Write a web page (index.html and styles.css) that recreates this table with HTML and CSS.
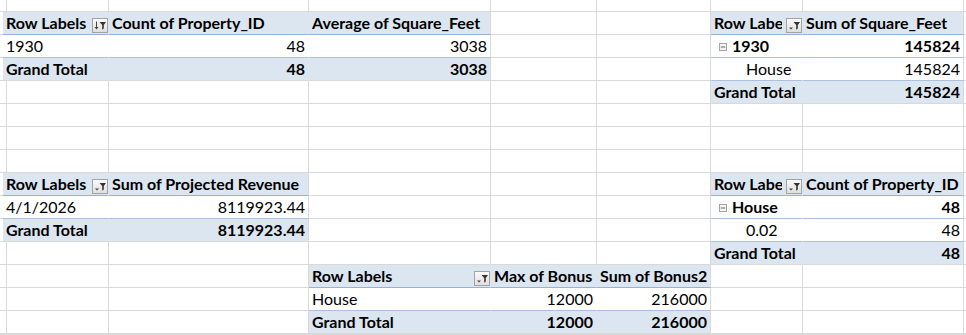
FILE: index.html
```html
<!DOCTYPE html>
<html>
<head>
<meta charset="utf-8">
<link rel="stylesheet" href="styles.css">
</head>
<body>
<div class="sheet">
<!-- row 0 -->
<div class="c"></div><div class="c"></div><div class="c"></div><div class="c"></div><div class="c"></div><div class="c"></div><div class="c"></div><div class="c"></div><div class="c"></div>
<!-- row 1 -->
<div class="c"></div>
<div class="c h in lbl"><span class="tx">Row Labels</span><svg class="fb" viewBox="0 0 16 15"><defs><linearGradient id="g1" x1="0" y1="0" x2="0" y2="1"><stop offset="0" stop-color="#fbfbfb"/><stop offset="1" stop-color="#dedede"/></linearGradient></defs><rect x="0.5" y="0.5" width="15" height="14" fill="url(#g1)" stroke="#a3a3a3"/><line x1="4.5" y1="3.5" x2="4.5" y2="10" stroke="#444"/><polygon points="2.5,9 6.5,9 4.5,11.5" fill="#444"/><polygon points="7.5,4 14,4 11.8,7 11.8,10.5 10.2,11.8 10.2,7" fill="#333"/></svg></div>
<div class="c h in"><span class="tx">Count of Property_ID</span></div>
<div class="c h"><span class="tx">Average of Square_Feet</span></div>
<div class="c"></div><div class="c"></div>
<div class="c h in lbl cl"><span class="tx">Row Labels</span><svg class="fb" viewBox="0 0 16 15"><rect x="0.5" y="0.5" width="15" height="14" fill="url(#g1)" stroke="#a3a3a3"/><polygon points="3,9.5 7,9.5 5,11.5" fill="#444"/><polygon points="7.5,4 14,4 11.8,7 11.8,10.5 10.2,11.8 10.2,7" fill="#333"/></svg></div>
<div class="c h"><span class="tx">Sum of Square_Feet</span></div>
<div class="c"></div>
<!-- row 2 -->
<div class="c"></div>
<div class="c d in"><span class="tx">1930</span></div>
<div class="c d in r"><span class="tx">48</span></div>
<div class="c d r"><span class="tx">3038</span></div>
<div class="c"></div><div class="c"></div>
<div class="c d in b grp"><svg class="cb" viewBox="0 0 9 9"><rect x="0.5" y="0.5" width="8" height="8" fill="#f4f4f4" stroke="#9c9c9c"/><line x1="2" y1="4.5" x2="7" y2="4.5" stroke="#555"/></svg><span class="tx">1930</span></div>
<div class="c d b r"><span class="tx">145824</span></div>
<div class="c"></div>
<!-- row 3 -->
<div class="c"></div>
<div class="c t in"><span class="tx">Grand Total</span></div>
<div class="c t in r"><span class="tx">48</span></div>
<div class="c t r"><span class="tx">3038</span></div>
<div class="c"></div><div class="c"></div>
<div class="c d in ind"><span class="tx">House</span></div>
<div class="c d r"><span class="tx">145824</span></div>
<div class="c"></div>
<!-- row 4 -->
<div class="c"></div><div class="c"></div><div class="c"></div><div class="c"></div><div class="c"></div><div class="c"></div>
<div class="c t in"><span class="tx">Grand Total</span></div>
<div class="c t r"><span class="tx">145824</span></div>
<div class="c"></div>
<!-- rows 5-7 -->
<div class="c"></div><div class="c"></div><div class="c"></div><div class="c"></div><div class="c"></div><div class="c"></div><div class="c"></div><div class="c"></div><div class="c"></div>
<div class="c"></div><div class="c"></div><div class="c"></div><div class="c"></div><div class="c"></div><div class="c"></div><div class="c"></div><div class="c"></div><div class="c"></div>
<div class="c"></div><div class="c"></div><div class="c"></div><div class="c"></div><div class="c"></div><div class="c"></div><div class="c"></div><div class="c"></div><div class="c"></div>
<!-- row 8 -->
<div class="c sel"></div>
<div class="c h in lbl"><span class="tx">Row Labels</span><svg class="fb" viewBox="0 0 16 15"><rect x="0.5" y="0.5" width="15" height="14" fill="url(#g1)" stroke="#a3a3a3"/><polygon points="3,9.5 7,9.5 5,11.5" fill="#444"/><polygon points="7.5,4 14,4 11.8,7 11.8,10.5 10.2,11.8 10.2,7" fill="#333"/></svg></div>
<div class="c h"><span class="tx">Sum of Projected Revenue</span></div>
<div class="c"></div><div class="c"></div><div class="c"></div>
<div class="c h in lbl cl"><span class="tx">Row Labels</span><svg class="fb" viewBox="0 0 16 15"><rect x="0.5" y="0.5" width="15" height="14" fill="url(#g1)" stroke="#a3a3a3"/><polygon points="3,9.5 7,9.5 5,11.5" fill="#444"/><polygon points="7.5,4 14,4 11.8,7 11.8,10.5 10.2,11.8 10.2,7" fill="#333"/></svg></div>
<div class="c h"><span class="tx">Count of Property_ID</span></div>
<div class="c"></div>
<!-- row 9 -->
<div class="c"></div>
<div class="c d in"><span class="tx">4/1/2026</span></div>
<div class="c d r"><span class="tx">8119923.44</span></div>
<div class="c"></div><div class="c"></div><div class="c"></div>
<div class="c d in b grp"><svg class="cb" viewBox="0 0 9 9"><rect x="0.5" y="0.5" width="8" height="8" fill="#f4f4f4" stroke="#9c9c9c"/><line x1="2" y1="4.5" x2="7" y2="4.5" stroke="#555"/></svg><span class="tx">House</span></div>
<div class="c d b r"><span class="tx">48</span></div>
<div class="c"></div>
<!-- row 10 -->
<div class="c"></div>
<div class="c t in"><span class="tx">Grand Total</span></div>
<div class="c t r"><span class="tx">8119923.44</span></div>
<div class="c"></div><div class="c"></div><div class="c"></div>
<div class="c d in ind"><span class="tx">0.02</span></div>
<div class="c d r"><span class="tx">48</span></div>
<div class="c"></div>
<!-- row 11 -->
<div class="c"></div><div class="c"></div><div class="c"></div><div class="c"></div><div class="c"></div><div class="c"></div>
<div class="c t in"><span class="tx">Grand Total</span></div>
<div class="c t r"><span class="tx">48</span></div>
<div class="c"></div>
<!-- row 12 -->
<div class="c"></div><div class="c"></div><div class="c"></div>
<div class="c h in lbl"><span class="tx">Row Labels</span><svg class="fb" viewBox="0 0 16 15"><rect x="0.5" y="0.5" width="15" height="14" fill="url(#g1)" stroke="#a3a3a3"/><polygon points="3,9.5 7,9.5 5,11.5" fill="#444"/><polygon points="7.5,4 14,4 11.8,7 11.8,10.5 10.2,11.8 10.2,7" fill="#333"/></svg></div>
<div class="c h in"><span class="tx">Max of Bonus</span></div>
<div class="c h"><span class="tx">Sum of Bonus2</span></div>
<div class="c"></div><div class="c"></div><div class="c"></div>
<!-- row 13 -->
<div class="c"></div><div class="c"></div><div class="c"></div>
<div class="c d in"><span class="tx">House</span></div>
<div class="c d in r"><span class="tx">12000</span></div>
<div class="c d r"><span class="tx">216000</span></div>
<div class="c"></div><div class="c"></div><div class="c"></div>
<!-- row 14 -->
<div class="c"></div><div class="c"></div><div class="c"></div>
<div class="c t in"><span class="tx">Grand Total</span></div>
<div class="c t in r"><span class="tx">12000</span></div>
<div class="c t r"><span class="tx">216000</span></div>
<div class="c"></div><div class="c"></div><div class="c"></div>
<!-- row 15 -->
<div class="c"></div><div class="c"></div><div class="c"></div><div class="c"></div><div class="c"></div><div class="c"></div><div class="c"></div><div class="c"></div><div class="c"></div>
</div>
</body>
</html>
```
FILE: styles.css
```css
html, body {
  margin: 0;
  padding: 0;
  background: #ffffff;
  overflow: hidden;
}
.sheet {
  display: grid;
  width: 966px;
  height: 335px;
  grid-template-columns: 3px 106px 200px 182px 106px 114px 92px 161px 1fr;
  grid-template-rows: 12px repeat(14, 23px) 1fr;
  font-family: Lato, "Open Sans", sans-serif;
  font-size: 16px;
  color: #000;
}
.c {
  box-sizing: border-box;
  border-right: 1px solid #d9d9d9;
  border-bottom: 1px solid #d9d9d9;
  overflow: hidden;
  white-space: nowrap;
  display: flex;
  line-height: 21px;
  padding: 0 3px 0 3px;
  min-width: 0;
}
.tx {
  overflow: hidden;
  flex: 1 1 auto;
  min-width: 0;
}
.r .tx { text-align: right; }
.h {
  background: #dce6f1;
  font-weight: 700;
  border-bottom-color: #95b3d7;
}
.d {
  background: #ffffff;
  border-bottom-color: #a9c0de;
}
.t {
  background: #dce6f1;
  font-weight: 700;
}
.b { font-weight: 700; }
.in { border-right-color: transparent; }
.lbl { padding-right: 0; }
.cl .tx { margin-right: 4px; }
.fb {
  flex: 0 0 16px;
  width: 16px;
  height: 15px;
  align-self: flex-end;
  margin-bottom: 1px;
}
.grp { padding-left: 8px; }
.cb {
  flex: 0 0 8px;
  width: 8px;
  height: 8px;
  align-self: center;
  margin-right: 5px;
  margin-top: 1px;
}
.ind { padding-left: 35px; }
.sel {
  border-right: 2px solid #217346;
}
```
